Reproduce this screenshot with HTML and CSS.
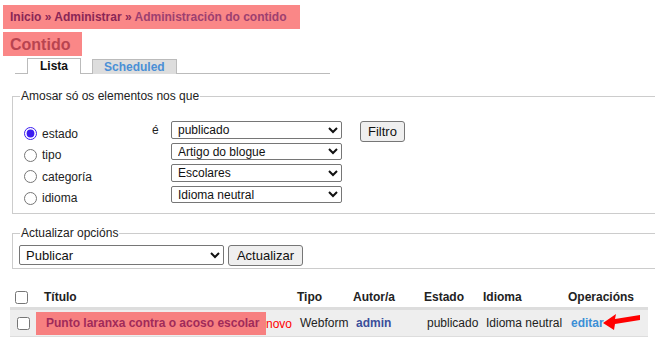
FILE: index.html
```html
<!DOCTYPE html>
<html>
<head>
<meta charset="utf-8">
<link rel="stylesheet" href="styles.css">
</head>
<body>
<div class="page">
  <div class="crumbs"><a class="c1">Inicio</a> » <a class="c1">Administrar</a> » <a class="c2">Administración do contido</a></div>
  <h1 class="title">Contido</h1>
  <ul class="tabs">
    <li class="tab active">Lista</li>
    <li class="tab">Scheduled</li>
  </ul>
  <fieldset class="fs filter">
    <legend>Amosar só os elementos nos que</legend>
    <div class="fgrid">
      <div class="radios">
        <label class="rl"><input type="radio" name="f" checked> estado</label>
        <label class="rl"><input type="radio" name="f"> tipo</label>
        <label class="rl"><input type="radio" name="f"> categoría</label>
        <label class="rl"><input type="radio" name="f"> idioma</label>
      </div>
      <div class="is">é</div>
      <div class="selects">
        <select class="sel"><option>publicado</option></select>
        <select class="sel"><option>Artigo do blogue</option></select>
        <select class="sel"><option>Escolares</option></select>
        <select class="sel"><option>Idioma neutral</option></select>
      </div>
      <div class="btnwrap"><button class="btn">Filtro</button></div>
    </div>
  </fieldset>
  <fieldset class="fs upd">
    <legend>Actualizar opcións</legend>
    <div class="urow">
      <select class="sel2"><option>Publicar</option></select>
      <button class="btn btn2">Actualizar</button>
    </div>
  </fieldset>
  <table class="list">
    <thead>
      <tr>
        <th class="cb"><input type="checkbox"></th>
        <th class="ct">Título</th>
        <th class="cty">Tipo</th>
        <th class="ca">Autor/a</th>
        <th class="ce">Estado</th>
        <th class="ci">Idioma</th>
        <th class="co">Operacións</th>
      </tr>
    </thead>
    <tbody>
      <tr>
        <td class="cb"><input type="checkbox"></td>
        <td class="ct"><span class="hl">Punto laranxa contra o acoso escolar</span><span class="new">novo</span></td>
        <td class="cty">Webform</td>
        <td class="ca"><a class="author">admin</a></td>
        <td class="ce">publicado</td>
        <td class="ci">Idioma neutral</td>
        <td class="co"><a class="edit">editar</a><svg class="arrow" width="40" height="20" viewBox="0 0 40 20"><path d="M2 11 L15 2 L14 7 L39 3 L39 8 L14 12 L13 18 Z" fill="#f00"/></svg></td>
      </tr>
    </tbody>
  </table>
</div>
</body>
</html>
```
FILE: styles.css
```css
html, body { margin: 0; padding: 0; background: #fff; }
body { font-family: "Liberation Sans", Arial, sans-serif; font-size: 12px; color: #222; overflow: hidden; width: 655px; height: 340px; }
.page { padding: 5px 0 0 3px; }
.crumbs { display: inline-block; background: #fa8787; height: 24px; line-height: 24px; padding: 0 13px 0 7px; font-size: 12px; font-weight: bold; color: #8a2656; }
.crumbs a { text-decoration: none; }
.c1 { color: #8a2656; }
.c2 { color: #9d4070; }
.title { display: block; width: 65px; margin: 3px 0 0 0; background: #fa8787; height: 24px; line-height: 25px; padding: 0 7px; font-size: 16px; font-weight: bold; color: #b84450; }
.tabs { list-style: none; margin: 2px 0 0 12px; padding: 0 0 0 12px; width: 303px; height: 15px; border-bottom: 1px solid #bbb; display: flex; gap: 11px; }
.tab { box-sizing: border-box; height: 15px; line-height: 14px; margin-top: 1px; border: 1px solid #bbb; border-bottom: none; background: #ddd; color: #4a8fd6; font-weight: bold; padding: 0 11px; text-align: center; }
.tab.active { background: #fff; color: #111; height: 16px; margin-top: 0; line-height: 15px; padding: 0 12px; }
.fs { border: 1px solid #ccc; margin: 0 0 0 9px; width: 660px; box-sizing: border-box; padding: 0 0 0 11px; }
.fs legend { padding: 0 1px; margin-left: -4px; color: #222; font-size: 12px; }
.filter { margin-top: 15px; height: 125px; }
.fgrid { display: flex; margin-top: 18px; }
.radios { width: 128px; display: flex; flex-direction: column; }
.rl { height: 21.5px; display: flex; align-items: center; gap: 5px; font-size: 12px; padding-top: 4px; box-sizing: border-box; }
.rl input { margin: 0; width: 13px; height: 13px; accent-color: #3b1cf0; }
.is { width: 19px; padding-top: 2px; font-size: 12px; }
.selects { display: flex; flex-direction: column; gap: 4px; }
.sel { width: 171px; height: 17.5px; font-family: "Liberation Sans", Arial, sans-serif; font-size: 12px; padding: 0 0 0 2px; border: 1px solid #767676; border-radius: 2px; background: #fff; color: #111; }
.btnwrap { padding-left: 18px; }
.btn { font-family: "Liberation Sans", Arial, sans-serif; font-size: 13px; height: 21px; padding: 0 7px; border: 1px solid #767676; border-radius: 3px; background: #efefef; color: #111; }
.upd { margin-top: 12px; height: 43px; padding-left: 6px; }
.upd legend { margin-left: 1px; }
.urow { display: flex; gap: 4px; margin-top: 5px; }
.sel2 { width: 205px; height: 20px; font-family: "Liberation Sans", Arial, sans-serif; font-size: 13px; border: 1px solid #767676; border-radius: 2px; background: #fff; color: #111; padding-left: 2px; }
.btn2 { width: 75px; padding: 0; }
.list { border-collapse: collapse; margin: 17px 0 0 7px; width: 638px; font-size: 12px; }
.list th { text-align: left; font-weight: bold; height: 21px; padding: 0; border-bottom: 3px solid #ddd; vertical-align: middle; color: #222; }
.list td { height: 26px; background: #eee; padding: 0; border-bottom: 1px solid #ddd; vertical-align: middle; color: #222; white-space: nowrap; }
.list input[type=checkbox] { margin: 0 0 0 5px; width: 13px; height: 13px; vertical-align: middle; }
.list td input[type=checkbox] { margin-left: 7px; }
.cb { width: 34px; }
.ct { width: 253px; }
.cty { width: 56px; }
.ca { width: 71px; }
.ce { width: 59px; }
.ci { width: 85px; }
.list td.cty, .list td.ca, .list td.ce, .list td.ci, .list td.co { text-indent: 3px; }
.hl { display: inline-block; vertical-align: middle; text-indent: 0; background: #f78080; height: 23px; line-height: 23px; padding: 0 5px 0 10px; margin-left: -8px; color: #a02a5a; font-weight: bold; width: 215px; }
.new { color: #f00; vertical-align: middle; }
.author { color: #3b4e9a; font-weight: bold; }
.edit { color: #3b8fd6; font-weight: bold; }
.co { position: relative; }
.arrow { position: absolute; left: 33px; top: 2px; }
```
